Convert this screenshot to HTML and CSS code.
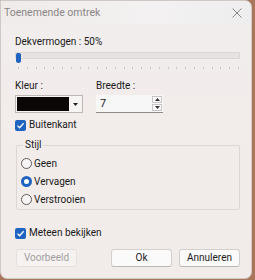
FILE: index.html
```html
<!DOCTYPE html>
<html>
<head>
  <meta charset="utf-8">
  <link rel="stylesheet" href="styles.css">
</head>
<body>

<div class="window">
  <div class="titlebar">
    <span class="title">Toenemende omtrek</span>
    <svg class="close" width="10" height="10" viewBox="0 0 10 10">
      <path d="M0.5 0.5 L9.5 9.5 M9.5 0.5 L0.5 9.5" stroke="#8a8684" stroke-width="1" fill="none"/>
    </svg>
  </div>

  <div class="content">
    <div class="label">Dekvermogen : 50%</div>
    <div class="slider">
      <div class="track"></div>
      <div class="thumb"></div>
    </div>
    <div class="ticks" id="ticks"></div>

    <div class="row">
      <div class="field field-color">
        <div class="label">Kleur :</div>
        <div class="combo">
          <div class="swatch"></div>
          <div class="drop">
            <svg width="5" height="3" viewBox="0 0 5 3"><path d="M0 0 H5 L2.5 3 Z" fill="#222"/></svg>
          </div>
        </div>
      </div>
      <div class="field field-width">
        <div class="label">Breedte :</div>
        <div class="spin">
          <span class="spin-value">7</span>
          <div class="spin-buttons">
            <div class="spin-btn">
              <svg width="5" height="3" viewBox="0 0 5 3"><path d="M0 3 H5 L2.5 0 Z" fill="#333"/></svg>
            </div>
            <div class="spin-btn">
              <svg width="5" height="3" viewBox="0 0 5 3"><path d="M0 0 H5 L2.5 3 Z" fill="#333"/></svg>
            </div>
          </div>
        </div>
      </div>
    </div>

    <label class="check check-outline">
      <span class="box checked">
        <svg width="9" height="9" viewBox="0 0 9 9"><path d="M1.5 4.6 L3.6 6.7 L7.6 2.2" stroke="#fff" stroke-width="1.3" fill="none"/></svg>
      </span>
      Buitenkant
    </label>

    <fieldset class="group">
      <legend>Stijl</legend>
      <label class="radio"><span class="dot"></span>Geen</label>
      <label class="radio"><span class="dot on"></span>Vervagen</label>
      <label class="radio"><span class="dot"></span>Verstrooien</label>
    </fieldset>

    <label class="check check-live">
      <span class="box checked">
        <svg width="9" height="9" viewBox="0 0 9 9"><path d="M1.5 4.6 L3.6 6.7 L7.6 2.2" stroke="#fff" stroke-width="1.3" fill="none"/></svg>
      </span>
      Meteen bekijken
    </label>

    <div class="buttons">
      <button class="btn btn-disabled">Voorbeeld</button>
      <span class="spacer"></span>
      <button class="btn">Ok</button>
      <button class="btn">Annuleren</button>
    </div>
  </div>
</div>

<script>
  // tick marks under the slider
  const ticks = document.getElementById('ticks');
  for (let i = 0; i < 26; i++) {
    ticks.appendChild(document.createElement('span'));
  }
</script>

</body>
</html>
```

FILE: styles.css
```css
* {
  box-sizing: border-box;
}

body {
  margin: 0;
  padding: 0;
  background: #a9765c;
  font-family: 'Roboto', sans-serif;
  font-size: 10px;
  color: #1a1a1a;
}

.window {
  width: 252px;
  height: 279px;
  background: linear-gradient(180deg, #f1eeee 0%, #f2eceb 40%, #f1ecea 100%);
  border: 1px solid #cfc8c5;
  border-radius: 0 7px 7px 7px;
  overflow: hidden;
}

.titlebar {
  height: 23px;
  display: flex;
  align-items: center;
  justify-content: space-between;
  padding: 0 9px 0 3px;
  background: linear-gradient(90deg, #efebea 0%, #f3f1f1 60%, #eeeeef 100%);
}

.title {
  color: #8a8685;
  font-size: 10.5px;
}

.close {
  display: block;
}

.content {
  padding: 0 11px 0 14px;
}

.label {
  line-height: 16px;
  height: 16px;
  white-space: nowrap;
}

.content > .label {
  margin-top: 10px;
}

/* slider */
.slider {
  position: relative;
  height: 12px;
}

.track {
  margin-top: 2px;
  height: 7px;
  background: #e6e3e2;
  border: 1px solid #dad6d5;
  border-radius: 1px;
}

.thumb {
  position: absolute;
  left: 1px;
  top: 1px;
  width: 5px;
  height: 10px;
  background: #1e63c0;
  border-radius: 2px 2px 3px 3px;
}

.ticks {
  margin: 3px 1px 0 3px;
  height: 2px;
  display: flex;
  justify-content: space-between;
}

.ticks span {
  width: 1px;
  height: 2px;
  background: #c9c4c2;
}

/* color + width */
.row {
  display: flex;
  margin-top: 9px;
}

.field-color {
  width: 81px;
}

.combo {
  margin-top: 1px;
  width: 68px;
  height: 18px;
  display: flex;
  border: 1px solid #bdb8b6;
  background: #f7f5f4;
  padding: 1px;
}

.swatch {
  flex: 1;
  background: #0b0706;
}

.drop {
  width: 12px;
  display: flex;
  align-items: center;
  justify-content: center;
}

.drop svg {
  display: block;
}

.spin {
  margin-top: 1px;
  width: 67px;
  height: 18px;
  display: flex;
  align-items: center;
  justify-content: space-between;
  background: #f8f7f7;
  border-bottom: 1px solid #8f8b8a;
  padding: 0 1px 0 4px;
}

.spin-value {
  line-height: 16px;
  font-size: 11px;
}

.spin-buttons {
  display: flex;
  flex-direction: column;
  gap: 1px;
}

.spin-btn {
  width: 10px;
  height: 7px;
  border: 1px solid #c9c5c4;
  background: #fbfbfb;
  display: flex;
  align-items: center;
  justify-content: center;
}

.spin-btn svg {
  display: block;
}

/* checkbox */
.check {
  display: flex;
  align-items: center;
  gap: 3px;
  height: 16px;
  line-height: 16px;
}

.check-outline {
  margin-top: 4px;
}

.check-live {
  margin-top: 15px;
}

.box {
  width: 11px;
  height: 11px;
  border-radius: 2px;
  display: flex;
  align-items: center;
  justify-content: center;
}

.box.checked {
  background: #1f64c0;
}

.box svg {
  display: block;
}

/* group box */
.group {
  margin: 4px 0 0 1px;
  padding: 1px 4px 1px 4px;
  border: 1px solid #dcd7d5;
  border-radius: 2px;
}

.group legend {
  padding: 0 2px;
  margin-left: 2px;
  line-height: 16px;
}

.radio {
  display: flex;
  align-items: center;
  gap: 2px;
  height: 18px;
}

.dot {
  width: 11px;
  height: 11px;
  border-radius: 50%;
  border: 1px solid #5f5b5a;
  background: #f7f5f5;
}

.dot.on {
  border: 3px solid #1f64c0;
  background: #fff;
}

/* buttons */
.buttons {
  display: flex;
  gap: 7px;
  margin-top: 8px;
}

.spacer {
  flex: 1;
}

.btn {
  width: 61px;
  height: 18px;
  padding: 0;
  font-family: 'Roboto', sans-serif;
  font-size: 10px;
  line-height: 16px;
  color: #1a1a1a;
  background: #fbfafa;
  border: 1px solid #d3cfcd;
  border-bottom-color: #bcb8b6;
  border-radius: 3px;
}

.btn-disabled {
  margin-left: 1px;
  color: #a3a09f;
  background: #f5f2f1;
  border-color: #e4e0de;
}
```
